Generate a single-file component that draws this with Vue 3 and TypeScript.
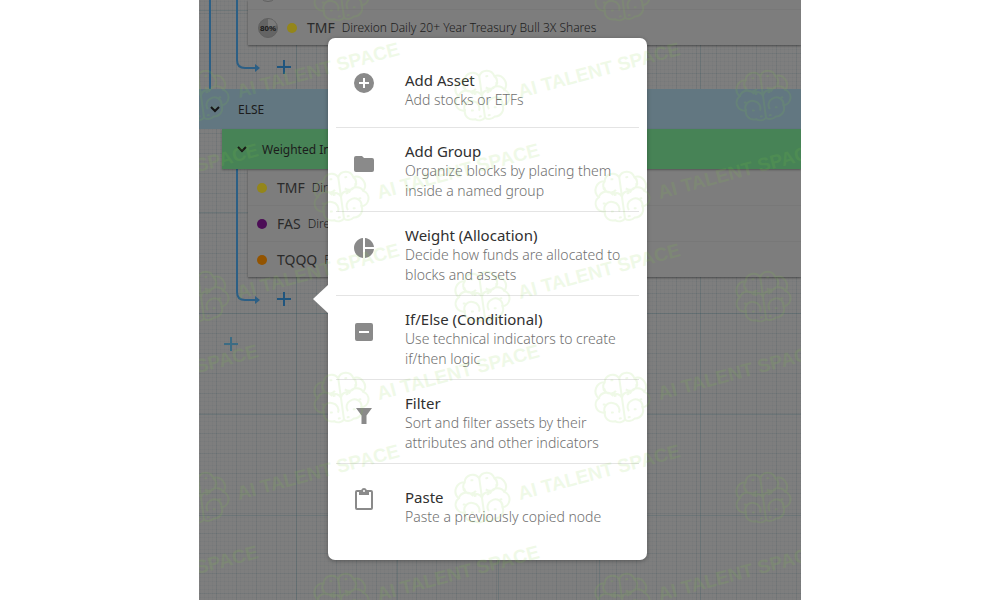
<script setup lang="ts">
interface Holding {
  ticker: string
  name: string
  tone: string
}

interface MenuEntry {
  title: string
  text: string
  icon: string
}

const holdings: Holding[] = [
  { ticker: 'TMF', name: 'Direxion Daily 20+ Year Treasury Bull 3X Shares', tone: 'yellow' },
  { ticker: 'FAS', name: 'Direxion Daily Financial Bull 3X Shares', tone: 'purple' },
  { ticker: 'TQQQ', name: 'ProShares UltraPro QQQ', tone: 'orange' },
]

const entries: MenuEntry[] = [
  {
    title: 'Add Asset',
    text: 'Add stocks or ETFs',
    icon: 'M12 2a10 10 0 1 0 0 20 10 10 0 0 0 0-20zm5 11h-4v4h-2v-4H7v-2h4V7h2v4h4z',
  },
  {
    title: 'Add Group',
    text: 'Organize blocks by placing them inside a named group',
    icon: 'M10 4H4a2 2 0 0 0-2 2v12a2 2 0 0 0 2 2h16a2 2 0 0 0 2-2V8a2 2 0 0 0-2-2h-8z',
  },
  {
    title: 'Weight (Allocation)',
    text: 'Decide how funds are allocated to blocks and assets',
    icon: 'M11 2v20C5.9 21.5 2 17.2 2 12s3.900-9.500 9-10zm2 0v9h9c-.5-4.700-4.200-8.500-9-9zm0 11v9c4.700-.5 8.500-4.200 9-9z',
  },
  {
    title: 'If/Else (Conditional)',
    text: 'Use technical indicators to create if/then logic',
    icon: 'M19 3H5a2 2 0 0 0-2 2v14a2 2 0 0 0 2 2h14a2 2 0 0 0 2-2V5a2 2 0 0 0-2-2zm-2 10H7v-2h10z',
  },
  {
    title: 'Filter',
    text: 'Sort and filter assets by their attributes and other indicators',
    icon: 'M4 4h16L14.500 11.500v8.500h-5v-8.500z',
  },
  {
    title: 'Paste',
    text: 'Paste a previously copied node',
    icon: 'M19 2h-4.200a3 3 0 0 0-5.600 0H5a2 2 0 0 0-2 2v16a2 2 0 0 0 2 2h14a2 2 0 0 0 2-2V4a2 2 0 0 0-2-2zm-7 0a1 1 0 1 1 0 2 1 1 0 0 1 0-2zm7 18H5V4h2v3h10V4h2z',
  },
]

const marks: { x: number; y: number }[] = []
for (let row = 0; row < 4; row++) {
  for (let col = 0; col < 3; col++) {
    marks.push({ x: 2 + col * 281, y: 96 + row * 201 })
    marks.push({ x: -139 + col * 281, y: -4 + row * 201 })
  }
}
</script>

<template>
  <main class="page">
    <div class="canvas">
      <div class="outer">
        <section class="branch">
          <div class="card clipped">
            <div class="row">
              <svg class="gauge" viewBox="0 0 22 22" aria-hidden="true">
                <circle cx="11" cy="11" r="9.500" fill="none" stroke="#606060" />
              </svg>
            </div>
            <div class="row">
              <svg class="gauge" viewBox="0 0 22 22" role="img" aria-label="80%">
                <circle cx="11" cy="11" r="9.500" fill="#646464" stroke="#606060" />
                <path d="M11 11V2A9 9 0 0 1 19.600 8.200z" fill="#7b7b7b" />
                <text x="11" y="14" text-anchor="middle" class="percent">80%</text>
              </svg>
              <span class="dot yellow"></span>
              <span class="ticker">TMF</span>
              <span class="name">Direxion Daily 20+ Year Treasury Bull 3X Shares</span>
            </div>
          </div>
          <div class="tail">
            <svg class="elbow" viewBox="0 0 24 44" aria-hidden="true">
              <path d="M1 0V15Q1 23 9 23H20" />
              <path class="tip" d="M19 19L24 23L19 27z" />
            </svg>
            <button class="plus" type="button" aria-label="Add block">
              <svg viewBox="0 0 18 18"><path d="M9 2V16M2 9H16" /></svg>
            </button>
          </div>
        </section>
      </div>

      <button class="bar else" type="button">
        <svg class="chevron" viewBox="0 0 10 10"><path d="M1 3L5 7L9 3" /></svg>
        <span>ELSE</span>
      </button>

      <div class="nested">
        <button class="bar weighted" type="button">
          <svg class="chevron" viewBox="0 0 10 10"><path d="M1 3L5 7L9 3" /></svg>
          <span>Weighted Inverse Volatility</span>
        </button>
        <section class="branch">
          <div class="card">
            <div v-for="item in holdings" :key="item.ticker" class="row">
              <span class="dot" :class="item.tone"></span>
              <span class="ticker">{{ item.ticker }}</span>
              <span class="name">{{ item.name }}</span>
            </div>
          </div>
          <div class="tail">
            <svg class="elbow" viewBox="0 0 24 44" aria-hidden="true">
              <path d="M1 0V15Q1 23 9 23H20" />
              <path class="tip" d="M19 19L24 23L19 27z" />
            </svg>
            <button class="plus" type="button" aria-label="Add block to group">
              <svg viewBox="0 0 18 18"><path d="M9 2V16M2 9H16" /></svg>
            </button>
          </div>
        </section>
      </div>

      <button class="plus root" type="button" aria-label="Add block to root">
        <svg viewBox="0 0 18 18"><path d="M9 2V16M2 9H16" /></svg>
      </button>

      <div class="popover">
        <svg class="pointer" viewBox="0 0 16 30" aria-hidden="true">
          <path d="M16 0L0 15L16 30z" fill="#fff" />
        </svg>
        <button v-for="entry in entries" :key="entry.title" class="entry" type="button">
          <svg class="icon" viewBox="0 0 24 24" aria-hidden="true">
            <path :d="entry.icon" fill="#8a8a8a" fill-rule="evenodd" />
          </svg>
          <span class="copy">
            <span class="title">{{ entry.title }}</span>
            <span class="text">{{ entry.text }}</span>
          </span>
        </button>
      </div>

      <svg class="marks" aria-hidden="true">
        <defs>
          <g id="brain" transform="rotate(-8)">
            <path
              d="M0-20A8 8 0 0 0-15-18A9 9 0 0 0-23-3A8 8 0 0 0-19 12A8 8 0 0 0-10 22A8 8 0 0 0 0 22A8 8 0 0 0 10 22A8 8 0 0 0 19 12A8 8 0 0 0 23-3A9 9 0 0 0 15-18A8 8 0 0 0 0-20z"
            />
            <path
              d="M0-20V22M-15-18A7 7 0 0 0-5-8M-23-3A8 8 0 0 1-9-4A6 6 0 0 1 0 0M-19 12A7 7 0 0 1-9 4A7 7 0 0 1-5 14M15-18A7 7 0 0 1 5-8M23-3A8 8 0 0 0 9-4A6 6 0 0 0 0 0M19 12A7 7 0 0 0 9 4A7 7 0 0 0 5 14"
            />
            <path
              class="spots"
              d="M-8-19h1M7-19h1M-17-11h1M16-11h1M-19 4h1M18 4h1M-7-3h1M6-3h1M-12 13h1M11 13h1M-5 20h1M4 20h1"
            />
          </g>
        </defs>
        <g v-for="(mark, i) in marks" :key="i" :transform="`translate(${mark.x} ${mark.y})`">
          <use href="#brain" />
          <text x="0" y="0" transform="translate(38 2) rotate(-15)">AI TALENT SPACE</text>
        </g>
      </svg>
    </div>
  </main>
</template>

<style>
body {
  margin: 0;
  background: #fff;
}
</style>

<style scoped>
.page {
  padding: 0 199px;
  font-family: "Noto Sans", "Open Sans", sans-serif;
}

.canvas {
  position: relative;
  min-height: 100vh;
  overflow: hidden;
  background-color: #7e7e7e;
  background-image:
    linear-gradient(90deg, rgba(40, 80, 90, 0.2) 1px, transparent 1px),
    linear-gradient(rgba(40, 80, 90, 0.2) 1px, transparent 1px),
    linear-gradient(90deg, rgba(40, 70, 80, 0.09) 1px, transparent 1px),
    linear-gradient(rgba(40, 70, 80, 0.09) 1px, transparent 1px),
    linear-gradient(90deg, rgba(40, 70, 80, 0.04) 1px, transparent 1px),
    linear-gradient(rgba(40, 70, 80, 0.04) 1px, transparent 1px);
  background-size: 101px 101px, 101px 101px, 20px 20px, 20px 20px, 4px 4px, 4px 4px;
  background-position: 97px 10px, 97px 10px, 17px 13px, 17px 13px, 1px 1px, 1px 1px;
}

button {
  border: 0;
  padding: 0;
  background: none;
  font: inherit;
  color: inherit;
  text-align: left;
  cursor: pointer;
}

.outer {
  margin-left: 10px;
  padding-left: 25px;
  border-left: 2px solid #2c5f85;
}

.card {
  background: #7d7d7d;
  box-shadow: 0 1px 2px rgba(0, 0, 0, 0.4);
}

.branch {
  display: grid;
  grid-template-columns: 12px 1fr;
}

.branch::before {
  content: "";
  border-left: 2px solid #2c5f85;
}

.clipped {
  height: 45px;
  display: flex;
  flex-direction: column;
  justify-content: flex-end;
}

.row {
  display: flex;
  flex-shrink: 0;
  align-items: center;
  height: 36px;
  box-sizing: border-box;
  padding-left: 9px;
  border-top: 1px solid #787878;
  color: #2a2a2a;
  white-space: nowrap;
}

.gauge {
  width: 22px;
  height: 22px;
  margin-right: 8px;
}

.percent {
  font: bold 8px "Liberation Sans", sans-serif;
  fill: #181818;
}

.dot {
  width: 10px;
  height: 10px;
  margin-right: 10px;
  border-radius: 50%;
}

.yellow {
  background: #94861a;
}

.purple {
  background: #4c0d56;
}

.orange {
  background: #935400;
}

.ticker {
  margin-right: 7px;
  font-size: 14px;
}

.name {
  font-size: 12px;
  font-weight: 300;
  color: #1c1c1c;
}

.tail {
  grid-column: 1 / -1;
  display: flex;
  align-items: center;
  gap: 15px;
  height: 44px;
}

.elbow {
  width: 24px;
  height: 44px;
  fill: none;
  stroke: #2c5f85;
  stroke-width: 2;
}

.tip {
  fill: #2c5f85;
  stroke: none;
}

.plus {
  width: 18px;
  height: 18px;
}

.plus svg {
  display: block;
  width: 18px;
  height: 18px;
  fill: none;
  stroke: #20557e;
  stroke-width: 2;
}

.bar {
  display: flex;
  align-items: center;
  width: 100%;
  height: 40px;
  color: #1c1c1c;
  font-size: 12px;
}

.chevron {
  width: 10px;
  height: 10px;
  fill: none;
  stroke: #151515;
  stroke-width: 2;
}

.else {
  padding-left: 11px;
  gap: 18px;
  background: #627781;
}

.nested {
  padding-left: 23px;
}

.weighted {
  position: relative;
  padding-left: 15px;
  gap: 15px;
  background: #478356;
  box-shadow: 0 1px 2px rgba(0, 0, 0, 0.3);
}

.nested .branch {
  margin-left: 14px;
}

.root {
  display: block;
  margin: 14px 0 0 23px;
}

.root svg {
  stroke: #3c6c84;
}

.popover {
  position: absolute;
  top: 38px;
  left: 129px;
  box-sizing: border-box;
  width: 319px;
  padding: 8px;
  border-radius: 7px;
  background: #fff;
  box-shadow: 0 1px 4px rgba(0, 0, 0, 0.3);
}

.pointer {
  position: absolute;
  top: 246px;
  left: -15px;
  width: 16px;
  height: 30px;
}

.entry {
  display: flex;
  align-items: flex-start;
  gap: 29px;
  width: 100%;
  padding: 13px 8px 10px 16px;
  border-bottom: 1px solid #e4e4e4;
}

.entry:first-of-type {
  padding-top: 24px;
  padding-bottom: 17px;
}

.entry:last-of-type {
  padding-top: 23px;
  padding-bottom: 25px;
  border-bottom: 0;
}

.icon {
  flex-shrink: 0;
  width: 24px;
  height: 24px;
  margin-top: 11px;
}

.entry:first-of-type .icon,
.entry:last-of-type .icon {
  margin-top: 1px;
}

.title,
.text {
  display: block;
  line-height: 20px;
}

.title {
  font-size: 15px;
  color: #303030;
}

.text {
  font-size: 14px;
  font-weight: 300;
  color: #707070;
}

.marks {
  position: absolute;
  inset: 0;
  width: 100%;
  height: 100%;
  pointer-events: none;
  opacity: 0.12;
  fill: none;
  stroke: #80d040;
  stroke-width: 2;
}

.marks text {
  font: bold 19px "Liberation Sans", sans-serif;
  fill: #80d040;
  stroke: none;
}

.spots {
  stroke-linecap: round;
}
</style>
